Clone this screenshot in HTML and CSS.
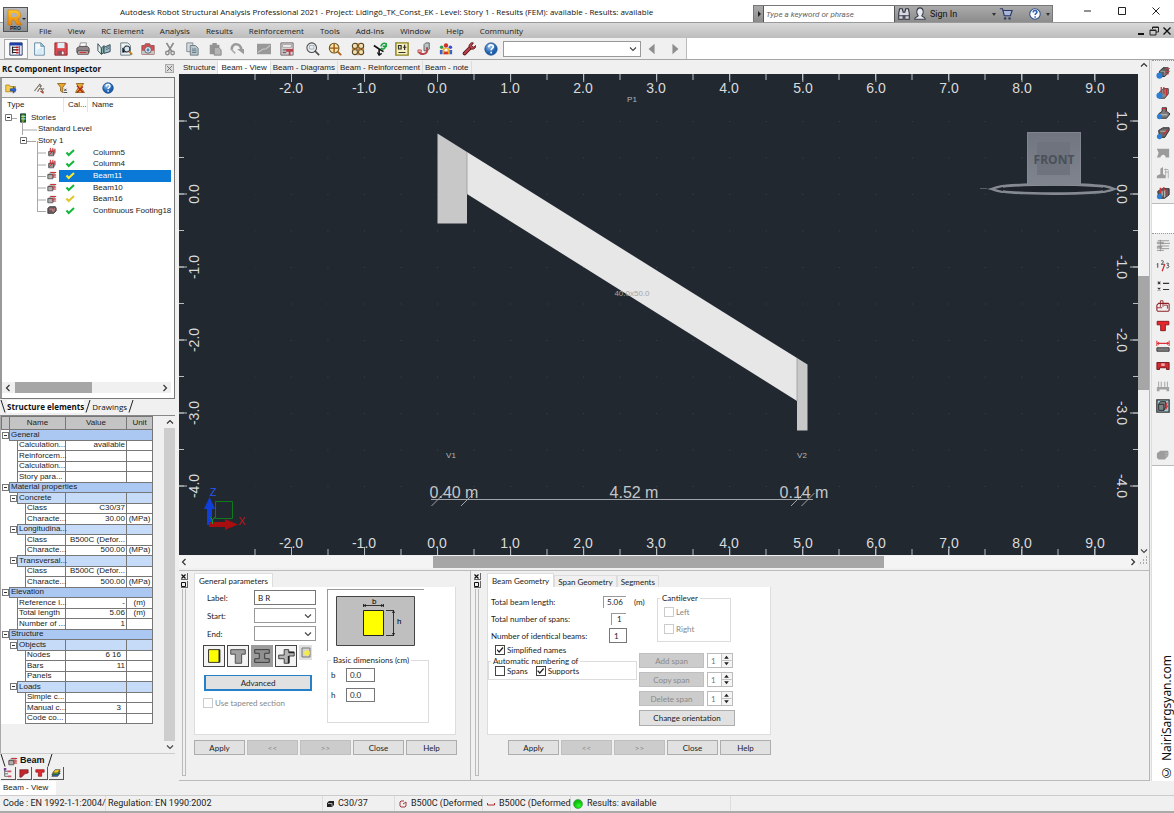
FILE: index.html
```html
<!DOCTYPE html>
<html lang="en">
<head>
<meta charset="utf-8">
<title>Autodesk Robot Structural Analysis Professional 2021</title>
<link rel="stylesheet" href="styles.css">
</head>
<body>
<svg class="defs" aria-hidden="true">
  <defs>
    <linearGradient id="gold" x1="0" y1="0" x2="0" y2="1"><stop offset="0" stop-color="#ffc62e"/><stop offset="1" stop-color="#e8820c"/></linearGradient>
    <linearGradient id="cube" x1="0" y1="0" x2="0" y2="1"><stop offset="0" stop-color="#70757f"/><stop offset="1" stop-color="#7f848e"/></linearGradient>
    <radialGradient id="ball" cx=".4" cy=".3"><stop offset="0" stop-color="#9cc8f5"/><stop offset="1" stop-color="#1c5fae"/></radialGradient>
    <radialGradient id="lamp" cx=".6" cy=".7"><stop offset="0" stop-color="#2cff2c"/><stop offset="1" stop-color="#0bbf0b"/></radialGradient>
    <pattern id="grid" x="437" y="121" width="36.525" height="36.5" patternUnits="userSpaceOnUse"><path d="M0 0h1v1h-1z" fill="#39414a"/></pattern>

    <symbol id="i-inspector" viewBox="0 0 16 16"><path d="M1 1h14v14H1z" fill="#fff" stroke="#16264f"/><path d="M1 1h14v3H1z" fill="#1d3fae"/><path d="M4 5v8M4 6h4M4 9h4M4 12h4" stroke="#222" stroke-width="1.4"/><path d="M8 5h3v2H8zM8 8h3v2H8zM8 11h3v2H8z" fill="#c01818"/><path d="M12 4v11" stroke="#5070c8" stroke-width="1.6"/></symbol>
    <symbol id="i-new" viewBox="0 0 16 16"><path d="M3 1h7l4 4v10H3z" fill="#f3f9fd" stroke="#56809a"/><path d="M10 1v4h4z" fill="#9cc6dc" stroke="#56809a" stroke-width=".7"/><path d="M5 9l7-3v8H5z" fill="#d6ebf6"/></symbol>
    <symbol id="i-save" viewBox="0 0 16 16"><path d="M1 1h13l1 1v13H1z" fill="#e0484e" stroke="#8d2228"/><path d="M4 1h8v6H4z" fill="#dff0f8"/><path d="M4 10h8v5H4z" fill="#8d5058"/><path d="M9 11h2v3H9z" fill="#fff"/></symbol>
    <symbol id="i-print" viewBox="0 0 16 16"><path d="M5 1h7l-1 5H4z" fill="#fff" stroke="#888"/><path d="M1 7l3-2h9l2 2v5H1z" fill="#8f8689" stroke="#4b4648"/><path d="M2 10h12v4H2z" fill="#c9bfc2" stroke="#4b4648"/><path d="M4 12h8" stroke="#c33" stroke-width="1.4"/></symbol>
    <symbol id="i-book" viewBox="0 0 16 16"><path d="M1 2l4 5v7l-4-4z" fill="#e9f1f4" stroke="#26414f"/><path d="M5 7l3-3v8l-3 2z" fill="#7fb59a" stroke="#26414f"/><path d="M8 6l7-3v8l-7 2z" fill="#a5bccb" stroke="#26414f"/><path d="M10 7l4-2M10 9l4-2" stroke="#4d6a7c"/></symbol>
    <symbol id="i-preview" viewBox="0 0 16 16"><path d="M2 1h8l3 3v11H2z" fill="#eef3f5" stroke="#5d7078"/><path d="M4 12V7h2v5M8 12V4" stroke="#456" /><circle cx="9" cy="8" r="3.4" fill="#cfe7f2" stroke="#333" stroke-width="1.2"/><path d="M11.500 10.500l3.500 4" stroke="#c07a1c" stroke-width="2"/></symbol>
    <symbol id="i-camera" viewBox="0 0 16 16"><path d="M1 4h3l1-2h5l1 2h4v10H1z" fill="#dc4a50" stroke="#8b5054"/><path d="M1 10h14v4H1z" fill="#c9c5c7"/><circle cx="8" cy="9" r="3.800" fill="#e8eef2" stroke="#555"/><circle cx="8" cy="9" r="1.800" fill="#4f88b8"/></symbol>
    <symbol id="i-cut" viewBox="0 0 16 16"><path d="M4 1l6 10M12 1L6 11" stroke="#8b8b8b" stroke-width="2"/><circle cx="5" cy="12.500" r="2" fill="none" stroke="#8b8b8b" stroke-width="1.600"/><circle cx="11" cy="12.500" r="2" fill="none" stroke="#8b8b8b" stroke-width="1.600"/></symbol>
    <symbol id="i-copy" viewBox="0 0 16 16"><path d="M2 1h7v10H2z" fill="#d5dadd" stroke="#7b868c"/><path d="M6 4h6l3 3v8H6z" fill="#b8c7ce" stroke="#69767c"/><path d="M8 8h5M8 10h5M8 12h5" stroke="#5e7580"/></symbol>
    <symbol id="i-paste" viewBox="0 0 16 16"><path d="M2 3h3V1h5v2h3v11H2z" fill="#949494"/><path d="M7 6h5l3 3v6H7z" fill="#b5b5b5" stroke="#858585"/></symbol>
    <symbol id="i-redo" viewBox="0 0 16 16"><path d="M2 9C1 1 12 0 13 9" fill="none" stroke="#9a9a9a" stroke-width="3"/><path d="M8 8h8v6z" fill="#9a9a9a"/><path d="M2 9l4 4" stroke="#b0b0b0" stroke-width="2"/></symbol>
    <symbol id="i-chart" viewBox="0 0 16 16"><path d="M0 2h16v12H0z" fill="#989898"/><path d="M1 12l6-4h3l5-4" fill="none" stroke="#c6c6c6" stroke-width="1.200"/></symbol>
    <symbol id="i-calc" viewBox="0 0 16 16"><path d="M1 1h14v14H1z" fill="#d7cfd1" stroke="#6b5f62"/><path d="M3 3h10v3H3z" fill="#f6f6f6" stroke="#777" stroke-width=".6"/><path d="M3 9h6M3 12h4" stroke="#666" stroke-width="1.500"/><path d="M7 8h8v3h-3v4h-2v-4H7z" fill="#b8444a"/></symbol>
    <symbol id="i-zoomwin" viewBox="0 0 16 16"><circle cx="6.500" cy="6.500" r="5.500" fill="#e6edf0" stroke="#4b4b4b" stroke-width="1.200"/><path d="M4 4h5v4H4z" fill="none" stroke="#aaa"/><path d="M10 10l5 5" stroke="#4b4b4b" stroke-width="2"/></symbol>
    <symbol id="i-zoomall" viewBox="0 0 16 16"><circle cx="7" cy="7" r="5.500" fill="#fbe3a4" stroke="#6b5420" stroke-width="1.200"/><path d="M7 2v10M2 7h10" stroke="#9a5b18" stroke-width="1.600"/><path d="M11 11l4 4" stroke="#b5641c" stroke-width="2.200"/></symbol>
    <symbol id="i-views" viewBox="0 0 16 16"><g fill="#f3dfae" stroke="#4f4022" stroke-width="1.200"><circle cx="4.500" cy="4.500" r="3"/><circle cx="11.500" cy="4.500" r="3"/><circle cx="4.500" cy="11.500" r="3"/><circle cx="11.500" cy="11.500" r="3"/></g><path d="M8 1v14M1 8h14" stroke="#b7711c" stroke-width="1.500" stroke-dasharray="2 1"/></symbol>
    <symbol id="i-axes" viewBox="0 0 16 16"><path d="M7 8V15M7 8L1 4M7 8l5 3" stroke="#111" stroke-width="1.800"/><path d="M5 12l2 3 3-2" fill="none" stroke="#111" stroke-width="1.400"/><path d="M9 5c1-4 4-4 6-3M15 1v4h-4M14 6c-1 2-3 3-5 1" fill="none" stroke="#19a33b" stroke-width="1.800"/></symbol>
    <symbol id="i-snap" viewBox="0 0 16 16"><path d="M1 1h14v14H1z" fill="#f5f0bd" stroke="#8a8120" stroke-width="1.600"/><path d="M4 4h3v4H4zM4 12h8M11 3v6M9 6h4" fill="none" stroke="#333" stroke-width="1.400"/></symbol>
    <symbol id="i-hook" viewBox="0 0 16 16"><path d="M8 3l2-2h4v7l-2 2H8z" fill="#b9c6c8" stroke="#555"/><path d="M11 6c4 9-9 10-9 4" fill="none" stroke="#b8444a" stroke-width="2.200"/><path d="M1 9h4v3H1z" fill="#e9a7a0" stroke="#a11c22" stroke-width=".6"/></symbol>
    <symbol id="i-people" viewBox="0 0 16 16"><circle cx="8" cy="4" r="2.500" fill="#d03028"/><circle cx="3" cy="6" r="2" fill="#28a048"/><circle cx="13" cy="6" r="2" fill="#3050d0"/><path d="M4 7h8v7H4z" fill="#f0b028"/><path d="M1 9h3v5H1zM12 9h3v5h-3z" fill="#3c62c8"/><path d="M5 14l3-6 3 6z" fill="#d03028"/><circle cx="8" cy="9.500" r="1.700" fill="#fff"/></symbol>
    <symbol id="i-wrench" viewBox="0 0 16 16"><path d="M3 13l7-7" stroke="#5c1418" stroke-width="4.400" stroke-linecap="round"/><path d="M3 13l7-7" stroke="#b8454b" stroke-width="2.400" stroke-linecap="round"/><path d="M8 5c0-3 3-5 5-4l-2 3 2 2 3-2c0 3-3 5-6 4z" fill="#b8454b" stroke="#5c1418"/></symbol>
    <symbol id="i-help" viewBox="0 0 16 16"><circle cx="8" cy="8" r="7" fill="url(#ball)" stroke="#1a4a86"/><path d="M5.500 6c0-4 6-3 5 0-.5 1.400-2.300 1.400-2.300 3.400M8.200 11v2" fill="none" stroke="#fff" stroke-width="1.900"/></symbol>
    <symbol id="i-helpw" viewBox="0 0 16 16"><circle cx="8" cy="8" r="7" fill="#fff" stroke="#2e4f86" stroke-width="1.400"/><path d="M5.500 6c0-4 6-3 5 0-.5 1.400-2.300 1.400-2.300 3.400M8.200 11v2" fill="none" stroke="#2a62b8" stroke-width="2"/></symbol>
    <symbol id="i-folder" viewBox="0 0 16 16"><path d="M1 4h5l1 2h7v7H1z" fill="#f4cf4e" stroke="#a87c14"/><path d="M7 9h4V6l4 4.500-4 4.500v-3H7z" fill="#2c63d6" stroke="#173b8f" stroke-width=".7"/></symbol>
    <symbol id="i-pointer" viewBox="0 0 16 16"><path d="M2 12l7-9 2 2-5 8M9 5l5 9M10 10l5-1" fill="none" stroke="#6f6a58" stroke-width="1.400"/><path d="M10 12l4 3" stroke="#b03020" stroke-width="1.600"/></symbol>
    <symbol id="i-filter" viewBox="0 0 16 16"><path d="M2 2h11l-4 5v7l-3-2V7z" fill="#eda72d" stroke="#7d5612"/><path d="M11 9l3 3M14 9l-3 3M10 14h5" stroke="#222"/></symbol>
    <symbol id="i-filteroff" viewBox="0 0 16 16"><path d="M3 2h10l-4 5 5 7H2l4-7z" fill="#eda72d" stroke="#7d5612"/><path d="M4 5l8 9M12 6l-8 8" stroke="#b3201c" stroke-width="1.600"/></symbol>
    <symbol id="i-back" viewBox="0 0 10 14"><path d="M8 1v12L1 7z" fill="#8e8e8e"/></symbol>
    <symbol id="i-fwd" viewBox="0 0 10 14"><path d="M2 1v12l7-6z" fill="#8e8e8e"/></symbol>
    <symbol id="i-left" viewBox="0 0 8 8"><path d="M5.500 1L2.500 4l3 3" fill="none" stroke="#333" stroke-width="1.200"/></symbol>
    <symbol id="i-right" viewBox="0 0 8 8"><path d="M2.500 1l3 3-3 3" fill="none" stroke="#333" stroke-width="1.200"/></symbol>
    <symbol id="i-up" viewBox="0 0 8 8"><path d="M1 5.500l3-3 3 3" fill="none" stroke="#333" stroke-width="1.200"/></symbol>
    <symbol id="i-down" viewBox="0 0 8 8"><path d="M1 2.500l3 3 3-3" fill="none" stroke="#444" stroke-width="1.100"/></symbol>
    <symbol id="i-caret" viewBox="0 0 6 6"><path d="M1 2h4L3 5z" fill="#333"/></symbol>

    <symbol id="i-column" viewBox="0 0 12 12"><path d="M2 5l3-2h5v5l-2 2H2z" fill="#9a9392"/><path d="M2 5.500h6v5M2 5.500v5h6" fill="none" stroke="#444"/><path d="M4 1v5M7 1v5M9.500 2v5M3 9l3-3" stroke="#d03038" stroke-width="1.200"/></symbol>
    <symbol id="i-beam" viewBox="0 0 12 12"><path d="M1 5l3-3h6v5l-3 3H1z" fill="#b4aeae"/><path d="M1 5.500h6v5M1 5.500v5h6" fill="none" stroke="#444"/><path d="M4 3h7M6 6h5M7 8.500h4" stroke="#d03038" stroke-width="1.200"/></symbol>
    <symbol id="i-footing" viewBox="0 0 12 12"><path d="M1 4l2-2h7l1 2v3l-3 3H1z" fill="#6b5c5e" stroke="#333"/><path d="M3 5h4v3M9 4l-1 4" fill="none" stroke="#d8848a" stroke-width="1.200"/></symbol>
    <symbol id="i-check" viewBox="0 0 10 10"><path d="M1.500 4.500l2.200 2.500L9 2" fill="none" stroke="currentColor" stroke-width="2"/></symbol>
    <symbol id="i-stories" viewBox="0 0 10 12"><path d="M2 1h6v10H2z" fill="#21772b" stroke="#133"/><path d="M3 4h5M3 7h5" stroke="#9fe0f0" stroke-width="1.400"/><path d="M5 2v9" stroke="#e8d030"/></symbol>
    <symbol id="i-treeview" viewBox="0 0 12 12"><path d="M2 1v9h4M2 4h3M2 7h4" fill="none" stroke="#555"/><path d="M1 0h3v3H1z" fill="#7a3a9a"/><path d="M5 3h5v2H5zM6 9h4v2H6z" fill="#c4566a"/></symbol>
    <symbol id="i-flag" viewBox="0 0 12 12"><path d="M1 2h10v4l-4 1-4 4H1z" fill="#c3262a" stroke="#5d1114" stroke-width=".7"/></symbol>
    <symbol id="i-tred" viewBox="0 0 12 12"><path d="M1 2h10v3H8v5H4V5H1z" fill="#e5262c" stroke="#861418" stroke-width=".8"/></symbol>
    <symbol id="i-layers" viewBox="0 0 12 12"><path d="M1 10l3-4h7l-3 4z" fill="#2f6fc4" stroke="#222" stroke-width=".7"/><path d="M1 8l3-4h7L8 8z" fill="#56b040" stroke="#222" stroke-width=".7"/><path d="M2 6l3-4h6L8 6z" fill="#f0c828" stroke="#222" stroke-width=".7"/></symbol>

    <symbol id="r-beam" viewBox="0 0 16 16"><path d="M4 6l4-4h6v6l-4 4H4z" fill="#5e5e60" stroke="#222"/><path d="M5 6h5v5" fill="none" stroke="#aaa"/><path d="M11 3h5M11 6h5M10 9h5" stroke="#d8464c"/><circle cx="4" cy="11" r="3.500" fill="#2c7fd6"/></symbol>
    <symbol id="r-column" viewBox="0 0 16 16"><path d="M4 7l4-4h6v6l-4 5H4z" fill="#8b8482" stroke="#333"/><path d="M6 1v8M9 1v8M12 3v8" stroke="#c83038" stroke-width="1.400"/><circle cx="4" cy="11" r="3.500" fill="#2c7fd6"/></symbol>
    <symbol id="r-foot" viewBox="0 0 16 16"><path d="M3 9l4-3V2h5v4l4 3-4 5H3z" fill="#7b7b7b" stroke="#222"/><path d="M7 3h4v4" fill="none" stroke="#c83038" stroke-width="1.300"/><path d="M5 10h8" stroke="#ccc"/><circle cx="4" cy="12" r="3" fill="#2c7fd6"/></symbol>
    <symbol id="r-slab" viewBox="0 0 16 16"><path d="M3 5l5-3h7v3l-5 8H4z" fill="#6a6a6c" stroke="#222"/><path d="M8 10l6-6" stroke="#c83038" stroke-width="1.600"/><path d="M5 6h6" stroke="#bbb"/><circle cx="4" cy="12" r="3" fill="#2c7fd6"/></symbol>
    <symbol id="r-deep" viewBox="0 0 16 16"><path d="M1 3h14v10h-4c0-4-5-4-6 0H1l2-5z" fill="#9b9b9b"/></symbol>
    <symbol id="r-wall" viewBox="0 0 16 16"><path d="M5 3l3-2v8l3 2v3H1v-3l4-2z" fill="#9b9b9b"/><path d="M11 3v10M14 5v9M9 4h5M10 7h4" stroke="#aaa"/></symbol>
    <symbol id="r-group" viewBox="0 0 16 16"><path d="M2 6l5-3h8v7l-5 4H3z" fill="#5f5f5f" stroke="#222"/><path d="M5 2v6M9 1v6M13 4v7" stroke="#d83038" stroke-width="1.600"/><path d="M10 5v8M7 6v5" stroke="#ddd"/><circle cx="4" cy="12" r="3" fill="#2c7fd6"/></symbol>
    <symbol id="r-list" viewBox="0 0 16 16"><path d="M1 3h8v3H1zM1 8h6v3H1z" fill="#aaa"/><path d="M2 2h13M5 5h11M2 8h13M6 11h9M1 13h8M5 1v13" stroke="#8f8f8f"/></symbol>
    <symbol id="r-levels" viewBox="0 0 16 16"><path d="M2 5v5M1 6l1-1M6 2c4-1 2 3 0 4h4M12 5c4-1 2 2 1 2 3 0 2 4-1 3" fill="none" stroke="#444" stroke-width="1.100"/><path d="M10 6l-3 8" stroke="#d22630" stroke-width="1.400"/></symbol>
    <symbol id="r-opts" viewBox="0 0 16 16"><path d="M2 3l3 3M5 3L2 6M2 10l3 3M5 10l-3 3M8 5h7M8 12h7" stroke="#333" stroke-width="1.200"/></symbol>
    <symbol id="r-rect" viewBox="0 0 16 16"><path d="M3 5h11l1 1v7l-1 1H2l-1-1V7z" fill="none" stroke="#8c2026" stroke-width="1.200"/><path d="M5 9V2h3v7M9 7h4v4M1 10h6" fill="none" stroke="#8c2026"/></symbol>
    <symbol id="r-dim" viewBox="0 0 16 16"><path d="M1 2v6M15 2v6M1 5h14M3 3.500v3M13 3.500v3" stroke="#e03038" stroke-width="1.200"/><path d="M1 10h14v4H1z" fill="#7d7d7d" stroke="#333"/></symbol>
    <symbol id="r-support" viewBox="0 0 16 16"><path d="M1 4h14v8h-3v-2H4v2H1z" fill="#cf2a30" stroke="#6d1114"/><path d="M6 5h4v3H6z" fill="#f0a8a8"/></symbol>
    <symbol id="r-load" viewBox="0 0 16 16"><path d="M1 9h14v5h-3v-2H4v2H1z" fill="#a2a2a2"/><path d="M3 3v6M6 3v6M10 3v6M13 3v6" stroke="#999"/></symbol>
    <symbol id="r-section" viewBox="0 0 16 16"><path d="M1 1h14v14H1z" fill="#a6c8d2" stroke="#333" stroke-width="1.500"/><path d="M3 6h6v7H3zM3 6l2-3h6v6l-2 4" fill="#7e8386" stroke="#222"/><path d="M13 4l-2 4h2l-2 4" fill="none" stroke="#d02a30" stroke-width="1.300"/></symbol>
    <symbol id="r-solid" viewBox="0 0 16 16"><path d="M1 6l4-3h9v6l-4 4H3l-2-2z" fill="#9d9d9d"/><path d="M10 6h5M10 9h4" stroke="#bbb"/></symbol>
  </defs>
</svg>

<header class="titlebar">
  <h1>Autodesk Robot Structural Analysis Professional 2021 - Project: Lidingö_TK_Const_EK - Level: Story 1 - Results (FEM): available - Results: available</h1>
  <form class="infocenter">
    <button type="button" class="infoarrow" aria-label="Collapse search"><svg viewBox="0 0 6 8"><path d="M2 1l3 3-3 3z" fill="#222"/></svg></button>
    <input type="text" placeholder="Type a keyword or phrase" aria-label="Search">
    <button type="button" aria-label="Find"><svg class="ic14" viewBox="0 0 16 16"><path d="M2 7l1-5h3l1 4h2l1-4h3l1 5v7H9v-4H7v4H2z" fill="#d7d9e2" stroke="#2f3340" stroke-width="1.200"/><path d="M2 10h5M9 10h5" stroke="#2f3340"/></svg></button>
    <button type="button" class="signin"><svg class="ic14" viewBox="0 0 16 16"><path d="M2 14c0-3 3-2 4-4-3-3-2-9 2-9s5 6 2 9c1 2 4 1 4 4z" fill="#e8eaf0" stroke="#3b404e" stroke-width="1.200"/></svg>Sign In<svg class="ic6"><use href="#i-caret"/></svg></button>
    <button type="button" aria-label="App store"><svg class="ic14" viewBox="0 0 16 16"><path d="M1 2h3l2 8h7l2-6H5" fill="#aab6d8" stroke="#2c3864" stroke-width="1.300"/><circle cx="7" cy="13" r="1.400" fill="#2c3864"/><circle cx="12" cy="13" r="1.400" fill="#2c3864"/></svg></button>
    <button type="button" class="infohelp" aria-label="Help"><svg class="ic12"><use href="#i-helpw"/></svg><svg class="ic6"><use href="#i-caret"/></svg></button>
  </form>
  <div class="winctl">
    <button aria-label="Minimize"><svg class="ic8" viewBox="0 0 8 8"><path d="M1 4h7" stroke="#222"/></svg></button>
    <button aria-label="Maximize"><svg class="ic8" viewBox="0 0 8 8"><path d="M.5.500h7v7h-7z" fill="none" stroke="#222"/></svg></button>
    <button aria-label="Close"><svg class="ic8" viewBox="0 0 8 8"><path d="M.5.500l7 7M7.500.500l-7 7" stroke="#222"/></svg></button>
  </div>
  <button class="logo" aria-label="Application menu">
    <svg viewBox="0 0 23 23"><path d="M4 2h7c7 0 7 8 3 9l4 6h-5l-3-5H8v5H4z" fill="url(#gold)" stroke="#b8720c" stroke-width=".5"/><path d="M8 5h3c3 0 3 4 0 4H8z" fill="#b0b2b4"/><path d="M18 10h4l-2 2z" fill="#222"/></svg>
    <span>PRO</span>
  </button>
</header>

<nav class="menubar">
  <a href="#">File</a><a href="#">View</a><a href="#">RC Element</a><a href="#">Analysis</a><a href="#">Results</a><a href="#">Reinforcement</a><a href="#">Tools</a><a href="#">Add-Ins</a><a href="#">Window</a><a href="#">Help</a><a href="#">Community</a>
  <div class="mdi">
    <button aria-label="Minimize document"><svg class="ic10" viewBox="0 0 10 10"><path d="M2 8h6" stroke="#111" stroke-width="2"/></svg></button>
    <button aria-label="Restore document"><svg class="ic10" viewBox="0 0 10 10"><path d="M3.500 3V1h6v5H7M1 4h6v5H1zM1 4.500h6M3.500 1.500h6" fill="none" stroke="#222"/></svg></button>
    <button aria-label="Close document"><svg class="ic10" viewBox="0 0 10 10"><path d="M1.500 1.500l7 7M8.500 1.500l-7 7" stroke="#111" stroke-width="1.400"/></svg></button>
  </div>
</nav>

<div class="toolbar">
  <div class="tools">
    <div class="tg g7">
      <button class="on" aria-label="Inspector"><svg class="ic14"><use href="#i-inspector"/></svg></button>
      <button aria-label="New"><svg class="ic14"><use href="#i-new"/></svg></button>
      <button aria-label="Save"><svg class="ic14"><use href="#i-save"/></svg></button>
      <button aria-label="Print"><svg class="ic14"><use href="#i-print"/></svg></button>
      <button aria-label="Printout composition"><svg class="ic14"><use href="#i-book"/></svg></button>
      <button aria-label="Print preview"><svg class="ic14"><use href="#i-preview"/></svg></button>
      <button aria-label="Screen capture"><svg class="ic14"><use href="#i-camera"/></svg></button>
    </div>
    <div class="tg g4">
      <button aria-label="Cut"><svg class="ic14"><use href="#i-cut"/></svg></button>
      <button aria-label="Copy"><svg class="ic14"><use href="#i-copy"/></svg></button>
      <button aria-label="Paste"><svg class="ic14"><use href="#i-paste"/></svg></button>
      <button aria-label="Redo"><svg class="ic14"><use href="#i-redo"/></svg></button>
    </div>
    <div class="tg g2">
      <button aria-label="Diagrams"><svg class="ic14"><use href="#i-chart"/></svg></button>
      <button aria-label="Calculations"><svg class="ic14"><use href="#i-calc"/></svg></button>
    </div>
    <div class="tg g9">
      <button aria-label="Zoom window"><svg class="ic14"><use href="#i-zoomwin"/></svg></button>
      <button aria-label="Zoom all"><svg class="ic14"><use href="#i-zoomall"/></svg></button>
      <button aria-label="Views"><svg class="ic14"><use href="#i-views"/></svg></button>
      <button aria-label="Rotate axes"><svg class="ic14"><use href="#i-axes"/></svg></button>
      <button aria-label="Snap settings"><svg class="ic14"><use href="#i-snap"/></svg></button>
      <button aria-label="Reinforcement"><svg class="ic14"><use href="#i-hook"/></svg></button>
      <button aria-label="Display"><svg class="ic14"><use href="#i-people"/></svg></button>
      <button aria-label="Preferences"><svg class="ic14"><use href="#i-wrench"/></svg></button>
      <button aria-label="Help topics"><svg class="ic14"><use href="#i-help"/></svg></button>
    </div>
    <span class="select layout"><select aria-label="Layout"><option></option></select><svg class="ic8"><use href="#i-down"/></svg></span>
    <div class="tg g2 nav">
      <button aria-label="Previous"><svg class="ic12"><use href="#i-back"/></svg></button>
      <button aria-label="Next"><svg class="ic12"><use href="#i-fwd"/></svg></button>
    </div>
  </div>
</div>

<main class="work">
  <aside class="side">
    <h2 class="sidehead">RC Component Inspector<button aria-label="Close inspector"><svg viewBox="0 0 8 8"><path d="M1 1l6 6M7 1L1 7" stroke="#666"/></svg></button></h2>
    <section class="inspector">
      <div class="insptools">
        <button aria-label="Open"><svg class="ic12"><use href="#i-folder"/></svg></button>
        <button class="far" aria-label="Select"><svg class="ic12"><use href="#i-pointer"/></svg></button>
        <button class="near" aria-label="Filter"><svg class="ic12"><use href="#i-filter"/></svg></button>
        <button aria-label="Clear filter"><svg class="ic12"><use href="#i-filteroff"/></svg></button>
        <button class="far" aria-label="Help"><svg class="ic12"><use href="#i-help"/></svg></button>
      </div>
      <div class="treehead"><span>Type</span><span>Cal...</span><span>Name</span></div>
      <div class="tree">
        <svg class="treelines" viewBox="0 0 60 105"><path d="M9 6.500h5M19.500 10v13M20 18h14M23 29.500h10M34.500 29v71M35 41h8M35 53h8M35 64.500h8M35 76h8M35 88h8M35 99.500h8" fill="none" stroke="#a8a8a8"/><path d="M2.500 2.500h6v6h-6zM17.500 25.500h6v6h-6z" fill="#fff" stroke="#777"/><path d="M4 5.500h3M19 28.500h3" stroke="#222"/></svg>
        <div class="trow"><span class="t1"><svg class="ic10"><use href="#i-stories"/></svg>Stories</span></div>
        <div class="trow"><span class="t2">Standard Level</span></div>
        <div class="trow"><span class="t2">Story 1</span></div>
        <div class="trow"><svg class="ic10 kind"><use href="#i-column"/></svg><span class="cell"><svg class="ic10 ok"><use href="#i-check"/></svg>Column5</span></div>
        <div class="trow"><svg class="ic10 kind"><use href="#i-column"/></svg><span class="cell"><svg class="ic10 ok"><use href="#i-check"/></svg>Column4</span></div>
        <div class="trow"><svg class="ic10 kind"><use href="#i-beam"/></svg><span class="cell sel"><svg class="ic10 warn"><use href="#i-check"/></svg>Beam11</span></div>
        <div class="trow"><svg class="ic10 kind"><use href="#i-beam"/></svg><span class="cell"><svg class="ic10 ok"><use href="#i-check"/></svg>Beam10</span></div>
        <div class="trow"><svg class="ic10 kind"><use href="#i-beam"/></svg><span class="cell"><svg class="ic10 warn"><use href="#i-check"/></svg>Beam16</span></div>
        <div class="trow"><svg class="ic10 kind"><use href="#i-footing"/></svg><span class="cell"><svg class="ic10 ok"><use href="#i-check"/></svg>Continuous Footing18</span></div>
      </div>
      <div class="hscroll treescroll"><svg class="ic8"><use href="#i-left"/></svg><i class="track"><i class="thumb"></i></i><svg class="ic8"><use href="#i-right"/></svg></div>
    </section>
    <div class="slanttabs"><svg class="slant" viewBox="0 0 6 13"><path d="M1 0l4 12.500" stroke="#222" fill="none"/></svg><b>Structure elements</b><svg class="slant" viewBox="0 0 6 13"><path d="M5 0L1 12.500" stroke="#222" fill="none"/></svg><span>Drawings</span><svg class="slant" viewBox="0 0 6 13"><path d="M5 0L1 12.500" stroke="#222" fill="none"/></svg></div>

    <section class="props">
      <table>
        <colgroup><col class="c8"><col class="c8"><col class="c8"><col class="c40"><col class="c61"><col class="c26"></colgroup>
        <thead><tr><th></th><th colspan="3">Name</th><th>Value</th><th>Unit</th></tr></thead>
        <tbody>
          <tr class="g"><td class="x"><i></i></td><td colspan="5">General</td></tr>
          <tr><td class="n" colspan="2"></td><td colspan="2">Calculation...</td><td class="v">available</td><td></td></tr>
          <tr><td class="n" colspan="2"></td><td colspan="2">Reinforcem...</td><td></td><td></td></tr>
          <tr><td class="n" colspan="2"></td><td colspan="2">Calculation...</td><td></td><td></td></tr>
          <tr><td class="n" colspan="2"></td><td colspan="2">Story para...</td><td></td><td></td></tr>
          <tr class="g"><td class="x"><i></i></td><td colspan="5">Material properties</td></tr>
          <tr class="s"><td class="n"></td><td class="x"><i></i></td><td colspan="2">Concrete</td><td></td><td></td></tr>
          <tr><td class="n" colspan="3"></td><td>Class</td><td class="v">C30/37</td><td></td></tr>
          <tr><td class="n" colspan="3"></td><td>Characte...</td><td class="v">30.00</td><td class="u">(MPa)</td></tr>
          <tr class="s"><td class="n"></td><td class="x"><i></i></td><td colspan="2">Longitudina...</td><td></td><td></td></tr>
          <tr><td class="n" colspan="3"></td><td>Class</td><td class="v">B500C (Defor...</td><td></td></tr>
          <tr><td class="n" colspan="3"></td><td>Characte...</td><td class="v">500.00</td><td class="u">(MPa)</td></tr>
          <tr class="s"><td class="n"></td><td class="x"><i></i></td><td colspan="2">Transversal...</td><td></td><td></td></tr>
          <tr><td class="n" colspan="3"></td><td>Class</td><td class="v">B500C (Defor...</td><td></td></tr>
          <tr><td class="n" colspan="3"></td><td>Characte...</td><td class="v">500.00</td><td class="u">(MPa)</td></tr>
          <tr class="g"><td class="x"><i></i></td><td colspan="5">Elevation</td></tr>
          <tr><td class="n" colspan="2"></td><td colspan="2">Reference l...</td><td class="v">-</td><td class="u">(m)</td></tr>
          <tr><td class="n" colspan="2"></td><td colspan="2">Total length</td><td class="v">5.06</td><td class="u">(m)</td></tr>
          <tr><td class="n" colspan="2"></td><td colspan="2">Number of ...</td><td class="v">1</td><td></td></tr>
          <tr class="g"><td class="x"><i></i></td><td colspan="5">Structure</td></tr>
          <tr class="s"><td class="n"></td><td class="x"><i></i></td><td colspan="2">Objects</td><td></td><td></td></tr>
          <tr><td class="n" colspan="3"></td><td>Nodes</td><td class="v list">6 16</td><td></td></tr>
          <tr><td class="n" colspan="3"></td><td>Bars</td><td class="v">11</td><td></td></tr>
          <tr><td class="n" colspan="3"></td><td>Panels</td><td></td><td></td></tr>
          <tr class="s"><td class="n"></td><td class="x"><i></i></td><td colspan="2">Loads</td><td></td><td></td></tr>
          <tr><td class="n" colspan="3"></td><td>Simple c...</td><td></td><td></td></tr>
          <tr><td class="n" colspan="3"></td><td>Manual c...</td><td class="v list">3</td><td></td></tr>
          <tr><td class="n" colspan="3"></td><td>Code co...</td><td></td><td></td></tr>
        </tbody>
      </table>
      <div class="vscroll"><svg class="ic8"><use href="#i-up"/></svg><i class="thumb"></i><svg class="ic8"><use href="#i-down"/></svg></div>
    </section>
    <div class="beamtab"><svg class="slant" viewBox="0 0 6 13"><path d="M1 0l4 12.500" stroke="#222" fill="none"/></svg><svg class="ic10"><use href="#i-beam"/></svg><b>Beam</b><svg class="slant" viewBox="0 0 6 13"><path d="M5 0L1 12.500" stroke="#222" fill="none"/></svg></div>
    <div class="viewbtns">
      <button aria-label="Tree"><svg class="ic10"><use href="#i-treeview"/></svg></button>
      <button aria-label="Calculation"><svg class="ic10"><use href="#i-flag"/></svg></button>
      <button aria-label="Section"><svg class="ic10"><use href="#i-tred"/></svg></button>
      <button aria-label="Layers"><svg class="ic10"><use href="#i-layers"/></svg></button>
    </div>
  </aside>

  <div class="center">
    <section class="viewer">
      <div class="viewmain">
        <nav class="viewtabs"><a href="#">Structure</a><a href="#" class="cur">Beam - View</a><a href="#">Beam - Diagrams</a><a href="#">Beam - Reinforcement</a><a href="#">Beam - note</a></nav>
        <svg class="canvas" viewBox="179 74 959 481" role="img" aria-label="Beam elevation">
          <path d="M179 74h959v481H179z" fill="#212830"/>
          <path d="M255 121h860v400H255z" fill="url(#grid)"/>
          <g stroke="#b9bdc2" fill="none">
            <path d="M254.500 77H1096M254.500 552H1096" stroke-width="6" stroke-dasharray="1 35.500"/>
            <path d="M291 78H1096M291 551H1096" stroke-width="8" stroke-dasharray="1 72.050"/>
            <path d="M181.500 120.500V488M1135.500 120.500V488" stroke-width="5" stroke-dasharray="1 35.500"/>
            <path d="M183 120.500V488M1134 120.500V488" stroke-width="8" stroke-dasharray="1 72"/>
          </g>
          <g class="scale">
            <text x="291" y="93">-2.0</text><text x="364" y="93">-1.0</text><text x="437" y="93">0.0</text><text x="510" y="93">1.0</text><text x="583" y="93">2.0</text><text x="656" y="93">3.0</text><text x="729" y="93">4.0</text><text x="803" y="93">5.0</text><text x="876" y="93">6.0</text><text x="949" y="93">7.0</text><text x="1022" y="93">8.0</text><text x="1095" y="93">9.0</text>
            <text x="291" y="548">-2.0</text><text x="364" y="548">-1.0</text><text x="437" y="548">0.0</text><text x="510" y="548">1.0</text><text x="583" y="548">2.0</text><text x="656" y="548">3.0</text><text x="729" y="548">4.0</text><text x="803" y="548">5.0</text><text x="876" y="548">6.0</text><text x="949" y="548">7.0</text><text x="1022" y="548">8.0</text><text x="1095" y="548">9.0</text>
            <g transform="rotate(-90)"><text x="-121" y="199">1.0</text><text x="-194" y="199">0.0</text><text x="-267" y="199">-1.0</text><text x="-340" y="199">-2.0</text><text x="-413" y="199">-3.0</text><text x="-486" y="199">-4.0</text></g>
          </g>
          <g>
            <path d="M437.500 133.500L467 152v71.500h-29.500z" fill="#c8c8c8"/>
            <path d="M467 152l330 206v43L467 194z" fill="#e7e7e7"/>
            <path d="M797 358l10.500 6.500v66H797z" fill="#c8c8c8"/>
            <path d="M467 152v42M797 358v43" stroke="#999" stroke-width=".8"/>
          </g>
          <path d="M431 499.500h382M431.500 506l13-13M461 506l13-13M791 506l13-13M801.500 506l13-13" stroke="#a0a4a9" fill="none"/>
          <g class="dims"><text x="454" y="498">0.40 m</text><text x="634" y="498">4.52 m</text><text x="804" y="498">0.14 m</text></g>
          <g class="tags"><text x="632" y="102">P1</text><text x="451" y="458">V1</text><text x="802" y="458">V2</text><text x="632" y="296" fill="#a4a6a8">40.0x50.0</text></g>
          <ellipse cx="1053" cy="189" rx="60" ry="4.600" fill="#1d232b" stroke="#858a92" stroke-width="2.600"/>
          <path d="M987 189l16-4v8zM1119 189l-16-4v8z" fill="#858a92"/>
          <path d="M1003 187l-8 2 8 2zM1103 187l8 2-8 2z" fill="#1d232b"/>
          <path d="M980 188.500h7" stroke="#5a6068"/>
          <path d="M1027 132h54v53h-54z" fill="url(#cube)"/>
          <path d="M1037 142h33v33h-33z" fill="#6e737d"/>
          <path d="M1027.500 132.500h53v53h-53z" fill="none" stroke="#8a8f98" stroke-width=".6"/>
          <text class="face" x="1054" y="164">FRONT</text>
          <g class="scale" transform="rotate(90)"><text x="121" y="-1117">1.0</text><text x="194" y="-1117">0.0</text><text x="267" y="-1117">-1.0</text><text x="340" y="-1117">-2.0</text><text x="413" y="-1117">-3.0</text><text x="486" y="-1117">-4.0</text></g>
          <path d="M215.500 501.500h17v17h-17z" fill="none" stroke="#0f7a1c"/>
          <path d="M207 525v-16h-3l5.500-12 5.500 12h-3v16z" fill="#0f3fd8"/>
          <path d="M209 522h16v-3l13 5.500-13 5.500v-3h-16z" fill="#a80d10"/>
          <path d="M210 517l2.500 3 2.500-3M212.500 520v4" stroke="#19962a" fill="none"/>
          <g class="ucs"><text x="213" y="496" fill="#2a55f0">Z</text><text x="242" y="525" fill="#c01418">X</text></g>
        </svg>
      </div>
      <div class="vscroll viewv"><svg class="ic8"><use href="#i-up"/></svg><i class="gap"></i><i class="thumb"></i><i class="rest"></i><svg class="ic8"><use href="#i-down"/></svg></div>
      <div class="hscroll viewh"><svg class="ic8"><use href="#i-left"/></svg><i class="track"><i class="thumb"></i></i><svg class="ic8"><use href="#i-right"/></svg></div>
      <svg class="sizegrip" viewBox="0 0 11 11"><path d="M8 2h1M8 5h1M5 5h1M8 8h1M5 8h1M2 8h1" stroke="#aaa" stroke-width="2"/></svg>
    </section>

    <div class="dialogs">
      <section class="dialog d1">
        <div class="grip"><button aria-label="Close panel"><svg viewBox="0 0 7 7"><path d="M1.500 1.500l4 4M5.500 1.500l-4 4" stroke="#111" stroke-width="1.200"/></svg></button><button aria-label="Float panel"><svg viewBox="0 0 7 7"><path d="M1.500 1.500h4v4h-4z" fill="none" stroke="#111"/></svg></button><i></i></div>
        <div class="dbody">
          <div class="dtabs"><button class="cur">General parameters</button></div>
          <div class="page general">
            <div class="gleft">
              <div class="fields">
                <label for="f-label">Label:</label><input id="f-label" type="text" value="B R">
                <label for="f-start">Start:</label><span class="select"><select id="f-start"><option></option></select><svg class="ic8"><use href="#i-down"/></svg></span>
                <label for="f-end">End:</label><span class="select"><select id="f-end"><option></option></select><svg class="ic8"><use href="#i-down"/></svg></span>
              </div>
              <div class="shapes">
                <button aria-label="Rectangle"><svg viewBox="0 0 22 22"><path d="M5 4h12v14H5z" fill="#ff0" stroke="#222"/><path d="M17 4v14" stroke="#222" stroke-width="2"/></svg></button>
                <button aria-label="T section"><svg viewBox="0 0 22 22"><path d="M3 4h16v5h-4v10H8V9H3z" fill="#a0a0a0" stroke="#444"/></svg></button>
                <button class="dark" aria-label="I section"><svg viewBox="0 0 22 22"><path d="M3 4h16v4h-5v6h5v4H3v-4h5V8H3z" fill="#8f8f8f" stroke="#333"/></svg></button>
                <button aria-label="Other section"><svg viewBox="0 0 22 22"><path d="M9 4h5v3h6v4h-6v8H9v-5H3v-4h6z" fill="#b4b4b4" stroke="#333"/><path d="M14 7h6M14 19v-8" stroke="#222" stroke-width="2"/></svg></button>
                <button class="tiny" aria-label="Variable section"><svg viewBox="0 0 12 14"><path d="M2 2h8v9H2z" fill="#d4d4d4" stroke="#777"/><circle cx="7" cy="7" r="2.800" fill="#f4ea48"/></svg></button>
              </div>
              <button class="btn focus">Advanced</button>
              <label class="chk off"><input type="checkbox" disabled>Use tapered section</label>
            </div>
            <div class="gright">
              <div class="preview"><svg viewBox="0 0 79 50"><path d="M.5.500h78v49H.5z" fill="#bfbfbf" stroke="#444"/><path d="M27.500 14.500h20v25h-20z" fill="#ff0" stroke="#222"/><path d="M27 9.500h21M27.500 8v3M47.500 8v3M50 14.500h8M50 39.500h8M57.500 14v26" stroke="#222" fill="none" stroke-width=".9"/><path d="M27 9.500l3-1.500v3zM48 9.500l-3-1.500v3zM57.500 14l-1.500 3h3zM57.500 40l-1.500-3h3z" fill="#222"/><text x="36" y="8">b</text><text x="61" y="28">h</text></svg></div>
              <fieldset class="basic"><legend>Basic dimensions (cm)</legend>
                <label for="f-b">b</label><input id="f-b" type="text" value="0.0">
                <label for="f-h">h</label><input id="f-h" type="text" value="0.0">
              </fieldset>
            </div>
          </div>
          <div class="actions"><button class="btn">Apply</button><button class="btn" disabled>&lt;&lt;</button><button class="btn" disabled>&gt;&gt;</button><button class="btn">Close</button><button class="btn">Help</button></div>
        </div>
      </section>
      <section class="dialog d2">
        <div class="grip"><button aria-label="Close panel"><svg viewBox="0 0 7 7"><path d="M1.500 1.500l4 4M5.500 1.500l-4 4" stroke="#111" stroke-width="1.200"/></svg></button><button aria-label="Float panel"><svg viewBox="0 0 7 7"><path d="M1.500 1.500h4v4h-4z" fill="none" stroke="#111"/></svg></button><i></i></div>
        <div class="dbody">
          <div class="dtabs"><button class="cur">Beam Geometry</button><button>Span Geometry</button><button>Segments</button></div>
          <div class="page geometry">
            <div class="lcol">
              <div class="row"><label for="g-len">Total beam length:</label><input id="g-len" class="flat long" type="text" value="5.06" readonly><span class="unit">(m)</span></div>
              <div class="row"><label for="g-spans">Total number of spans:</label><input id="g-spans" class="flat short" type="text" value="1" readonly></div>
              <div class="row"><label for="g-id">Number of identical beams:</label><input id="g-id" class="short last" type="text" value="1"></div>
              <label class="chk simp"><input type="checkbox" checked>Simplified names</label>
              <fieldset class="auto"><legend>Automatic numbering of</legend><label class="chk"><input type="checkbox">Spans</label><label class="chk"><input type="checkbox" checked>Supports</label></fieldset>
            </div>
            <div class="rcol">
              <fieldset class="cant"><legend>Cantilever</legend><label class="chk off"><input type="checkbox" disabled>Left</label><label class="chk off"><input type="checkbox" disabled>Right</label></fieldset>
              <div class="spanrow"><button class="btn" disabled>Add span</button><span class="spin"><input type="text" value="1" aria-label="Spans to add" disabled><svg viewBox="0 0 11 14"><path d="M0 0v14M0 7h11" stroke="#bbb"/><path d="M3 5h5L5.500 2zM3 9h5l-2.500 3z" fill="#222"/></svg></span></div>
              <div class="spanrow"><button class="btn" disabled>Copy span</button><span class="spin"><input type="text" value="1" aria-label="Span to copy" disabled><svg viewBox="0 0 11 14"><path d="M0 0v14M0 7h11" stroke="#bbb"/><path d="M3 5h5L5.500 2zM3 9h5l-2.500 3z" fill="#222"/></svg></span></div>
              <div class="spanrow"><button class="btn" disabled>Delete span</button><span class="spin"><input type="text" value="1" aria-label="Span to delete" disabled><svg viewBox="0 0 11 14"><path d="M0 0v14M0 7h11" stroke="#bbb"/><path d="M3 5h5L5.500 2zM3 9h5l-2.500 3z" fill="#222"/></svg></span></div>
              <button class="btn orient">Change orientation</button>
            </div>
          </div>
          <div class="actions"><button class="btn">Apply</button><button class="btn" disabled>&lt;&lt;</button><button class="btn" disabled>&gt;&gt;</button><button class="btn">Close</button><button class="btn">Help</button></div>
        </div>
      </section>
    </div>
  </div>

  <aside class="rail">
    <div class="rg">
      <button aria-label="Beam"><svg class="ic14"><use href="#r-beam"/></svg></button>
      <button aria-label="Column"><svg class="ic14"><use href="#r-column"/></svg></button>
      <button aria-label="Spread footing"><svg class="ic14"><use href="#r-foot"/></svg></button>
      <button aria-label="Continuous footing"><svg class="ic14"><use href="#r-slab"/></svg></button>
      <button aria-label="Deep beam"><svg class="ic14"><use href="#r-deep"/></svg></button>
      <button aria-label="Wall"><svg class="ic14"><use href="#r-wall"/></svg></button>
      <button aria-label="Group"><svg class="ic14"><use href="#r-group"/></svg></button>
    </div>
    <div class="rg second">
      <button aria-label="Options list"><svg class="ic14"><use href="#r-list"/></svg></button>
      <button aria-label="Levels"><svg class="ic14"><use href="#r-levels"/></svg></button>
      <button aria-label="Calculation options"><svg class="ic14"><use href="#r-opts"/></svg></button>
      <button aria-label="Reinforcement pattern"><svg class="ic14"><use href="#r-rect"/></svg></button>
      <button aria-label="Section"><svg class="ic14"><use href="#i-tred"/></svg></button>
      <button aria-label="Dimensions"><svg class="ic14"><use href="#r-dim"/></svg></button>
      <button aria-label="Supports"><svg class="ic14"><use href="#r-support"/></svg></button>
      <button aria-label="Loads"><svg class="ic14"><use href="#r-load"/></svg></button>
      <button aria-label="Drawings"><svg class="ic14"><use href="#r-section"/></svg></button>
      <button class="apart" aria-label="Solid"><svg class="ic14"><use href="#r-solid"/></svg></button>
    </div>
    <p class="credit">© NairiSargsyan.com</p>
  </aside>
</main>

<nav class="docbar"><a href="#">Beam - View</a></nav>
<footer class="status">
  <span class="s1">Code : EN 1992-1-1:2004/</span>
  <span class="s2">Regulation: EN 1990:2002</span>
  <span class="s3"><svg class="ic8" viewBox="0 0 8 8"><path d="M1 3l2-2h5v4L6 7H1z" fill="#222"/><path d="M2 3.500h4v3" stroke="#aaa" fill="none"/></svg>C30/37</span>
  <span class="s4"><svg class="ic8" viewBox="0 0 8 8"><path d="M5 1H2L1 2v4l1 1h4l1-1V2L4 4" stroke="#9a3a40" fill="none"/></svg>B500C (Deformed</span>
  <span class="s4"><svg class="ic8" viewBox="0 0 8 8"><path d="M.5 3v2h7V3" stroke="#b02a30" fill="none"/></svg>B500C (Deformed</span>
  <span class="s5"><svg class="ic10" viewBox="0 0 10 10"><circle cx="5" cy="5" r="4.500" fill="url(#lamp)" stroke="#4a8a50" stroke-width=".6"/></svg>Results: available</span>
</footer>
</body>
</html>
```
FILE: styles.css
```css
* { box-sizing: border-box; }
html, body { margin: 0; }
body {
  display: flex; flex-direction: column; min-height: 100vh;
  background: #f0f0f0; color: #1c1c1c;
  font: 8px/10px "Liberation Sans", Arial, sans-serif;
}
button, input, select { font: inherit; color: inherit; margin: 0; padding: 0; border: 0; background: none; border-radius: 0; }
button { display: inline-flex; align-items: center; justify-content: center; }
a { color: inherit; text-decoration: none; }
h1, h2, p { margin: 0; font: inherit; }
i { display: block; }
svg { display: block; flex: none; }
fieldset { margin: 0; padding: 0; border: 1px solid #dcdcdc; min-width: 0; }
legend { padding: 0 2px; }
.defs { position: absolute; width: 0; height: 0; }
.ic6 { width: 6px; height: 6px; }
.ic8 { width: 8px; height: 8px; }
.ic10 { width: 10px; height: 10px; }
.ic12 { width: 12px; height: 12px; }
.ic14 { width: 14px; height: 14px; }

/* Title bar */
.titlebar { position: relative; display: flex; align-items: flex-start; height: 22px; background: #fff; font-family: "Open Sans", sans-serif; }
.titlebar h1 { flex: 1; padding-left: 120px; font-size: 8px; line-height: 23px; color: #111; white-space: nowrap; overflow: hidden; }
.infocenter { display: flex; align-items: stretch; width: 300px; height: 17px; margin-top: 5px; border: 1px solid #777; border-bottom: 0; background: linear-gradient(#aaa, #8c8c8c); }
.infocenter input { width: 132px; padding: 0 2px; background: #fff; border: 1px solid #555; border-width: 0 1px; font: italic 8px Roboto, sans-serif; }
.infocenter input::placeholder { color: #666; opacity: 1; }
.infocenter button { width: 18px; }
.infocenter .infoarrow { width: 9px; }
.infoarrow svg { width: 6px; height: 8px; }
.infocenter .signin { width: 84px; justify-content: flex-start; gap: 3px; color: #111; font: 9px Roboto, sans-serif; }
.signin .ic6 { margin-left: auto; }
.infocenter .infohelp { flex: 1; gap: 4px; justify-content: flex-end; padding-right: 1px; }
.winctl { display: flex; width: 121px; padding: 7px 14px 0 30px; justify-content: space-between; }
.logo { position: absolute; left: 3px; top: 7px; width: 25px; height: 25px; border: 1px solid #555; background: linear-gradient(#b9bbbd, #8c8e90); }
.logo svg { width: 23px; height: 23px; }
.logo span { position: absolute; left: 6px; bottom: 0; font: bold 5px/6px "Liberation Sans", sans-serif; color: #222; }

/* Menus and toolbar */
.menubar { display: flex; align-items: center; gap: 16px; height: 16px; padding-left: 39px; border-top: 1px solid #999; background: linear-gradient(#d9d9d9, #bdbdbd); font: 8px/14px "Open Sans", sans-serif; color: #222; }
.mdi { display: flex; gap: 3px; margin-left: auto; padding-right: 2px; }
.toolbar { height: 22px; background: #fff; border-bottom: 1px solid #a5a5a5; }
.tools { display: flex; align-items: center; width: 687px; height: 21px; padding-left: 4px; background: #f0f0f0; border-right: 1px solid #bbb; }
.tg { display: flex; }
.tg button { flex: 1; height: 20px; }
.tg .on { border: 1px solid #aaa; background: #fafafa; }
.g7 { width: 155px; }
.g4 { width: 89px; }
.g2 { width: 45px; margin-left: 5px; }
.g9 { width: 200px; margin: 0 1px 0 4px; }
.nav { margin-left: 0; }
.select { display: grid; grid-template-columns: 1fr 12px; align-items: center; }
.select select { grid-area: 1 / 1 / 2 / 3; width: 100%; height: 100%; appearance: none; background: #fff; border: 1px solid #999; }
.select svg { grid-area: 1 / 2; pointer-events: none; }
.layout { width: 138px; height: 16px; }

/* Work area */
.work { flex: 1; display: grid; grid-template-columns: 179px 1fr 24px; }

.side { display: flex; flex-direction: column; padding-right: 4px; }
.sidehead { display: flex; align-items: center; height: 17px; padding-left: 2px; font: bold 8px/15px "Open Sans", sans-serif; color: #111; }
.sidehead button { width: 9px; height: 9px; margin-left: auto; margin-right: 1px; border: 1px solid #aaa; background: #ddd; }
.sidehead button svg { width: 7px; height: 7px; }
.inspector { display: flex; flex-direction: column; height: 322px; padding-right: 3px; border: 1px solid #777; border-left: 2px solid #999; background: #fff; }
.insptools { display: flex; align-items: center; height: 20px; margin-right: -3px; background: #f0f0f0; border-bottom: 1px solid #999; }
.insptools button { width: 18px; }
.insptools .far { margin-left: 10px; }
.insptools .near { margin-left: 5px; }
.treehead { display: grid; grid-template-columns: 61px 24px 1fr; height: 14px; line-height: 14px; padding-left: 1px; }
.treehead span { padding-left: 4px; border-right: 1px solid #e5e5e5; }
.treehead span:last-child { border: 0; }
.tree { position: relative; display: grid; grid-template-rows: repeat(9, 1fr); height: 105px; }
.treelines { position: absolute; left: 1px; top: 0; width: 60px; height: 105px; }
.trow { display: flex; align-items: stretch; min-height: 0; }
.trow span { display: flex; align-items: center; white-space: nowrap; }
.t1 { padding-left: 16px; gap: 3px; }
.t2 { padding-left: 36px; }
.kind { margin: 0 2px 0 45px; }
.cell { flex: 1; padding-left: 6px; gap: 18px; }
.sel { background: #0a78d7; color: #fff; }
.ok { color: #12b83c; }
.warn { color: #e2c62c; }
.sel .warn { color: #ffe92e; }

.hscroll { display: flex; align-items: center; height: 11px; background: #f0f0f0; }
.hscroll .track { flex: 1; height: 100%; }
.thumb { background: #a6a6a6; }
.hscroll .thumb { height: 100%; }
.treescroll { margin-top: auto; margin-bottom: 5px; padding: 0 2px; }
.treescroll .track { margin: 0 3px; }
.treescroll .thumb { width: 54%; }
.vscroll { display: flex; flex-direction: column; align-items: center; width: 11px; background: #f0f0f0; }
.vscroll .thumb { width: 100%; }

.slanttabs, .beamtab { display: flex; align-items: center; height: 14px; gap: 1px; font: 8px/13px "Open Sans", sans-serif; color: #111; }
.slant { width: 6px; height: 13px; }
.slanttabs { margin-bottom: 2px; }
.slanttabs b { background: #fff; }
.props { flex: 1; display: flex; align-items: stretch; justify-content: space-between; border-left: 1px solid #aaa; border-top: 1px solid #888; }
.props table { width: 152px; height: 308px; border-collapse: collapse; table-layout: fixed; background: #fff; line-height: 8px; }
.c8 { width: 8px; }
.c40 { width: 40px; }
.c61 { width: 61px; }
.c26 { width: 26px; }
.props th, .props td { padding: 0 1px; border: 1px solid #777; white-space: nowrap; text-align: left; vertical-align: middle; font-weight: normal; }
.props thead th { height: 13px; background: #c4c4c4; text-align: center; }
.props .g td { background: #abc8f2; }
.props .s td { background: #c6dbf7; }
.props tr .n { background: #fff; border-style: none solid none none; }
.props .s .n { border-right-style: none; }
.props tr .x { background: #fff; padding: 0; border-style: none solid none none; }
.x i { width: 7px; height: 7px; border: 1px solid #777; background: linear-gradient(#333, #333) center / 3px 1px no-repeat #fff; }
.props .v { text-align: right; }
.props .list { padding-right: 5px; }
.props .u { text-align: center; }
.props .vscroll .thumb { flex: 1; background: #cdcdcd; }
.props .vscroll svg { margin: 2px 0; }
.beamtab b { font: bold 9px/13px "Liberation Sans", sans-serif; }
.beamtab { gap: 2px; border-top: 1px solid #ccc; }
.viewbtns { display: flex; height: 14px; padding-left: 1px; gap: 1px; }
.viewbtns button { width: 15px; height: 13px; border-right: 1px solid #555; border-bottom: 1px solid #555; }

/* Model view */
.center { display: flex; flex-direction: column; border-right: 1px solid #b5b5b5; min-width: 0; }
.viewer { display: grid; grid-template-columns: 1fr 11px; padding-top: 1px; }
.viewmain { min-width: 0; }
.viewtabs { display: flex; height: 13px; padding-left: 2px; line-height: 13px; }
.viewtabs a { padding: 0 2px; border-right: 1px solid #ddd; white-space: nowrap; }
.viewtabs .cur { padding: 0 3px; background: #fff; }
.canvas { width: 100%; height: auto; background: #212830; }
.canvas text { font-family: "Liberation Sans", sans-serif; text-anchor: middle; }
.scale text { font-size: 14px; fill: #d9dadb; }
.dims text { font-size: 16px; fill: #c4c6c8; }
.tags text { font-size: 8px; }
.tags text:not([fill]) { fill: #b5b8bb; }
.ucs text { font-size: 11px; }
.canvas .face { font: bold 12px "Open Sans", sans-serif; fill: #4a505a; }
.viewv .gap { height: 207px; }
.viewv .thumb { height: 114px; }
.viewv .rest { flex: 1; }
.viewh { height: 12px; margin-top: 1px; padding: 0 1px; background: #f4f4f4; }
.viewh .thumb { width: 48%; margin-left: 26%; }
.sizegrip { width: 11px; height: 11px; }

/* Docked dialogs */
.dialogs { flex: 1; display: flex; margin-top: 2px; border-top: 1px solid #bbb; border-bottom: 1px solid #bbb; font-family: Lato, sans-serif; }
.dialog { display: flex; }
.d1 { width: 292px; border-right: 1px solid #bbb; }
.grip { display: flex; flex-direction: column; align-items: center; width: 8px; margin: 2px 6px 4px 2px; gap: 1px; }
.d1 .grip { margin-left: 1px; }
.grip button { width: 7px; height: 7px; border-right: 1px solid #666; border-bottom: 1px solid #666; }
.grip svg { width: 7px; height: 7px; }
.grip i { flex: 1; width: 4px; border: 1px solid #bbb; border-top: 0; }
.dbody { display: flex; flex-direction: column; padding-top: 2px; }
.dtabs { display: flex; align-items: flex-end; height: 14px; }
.dtabs button { height: 12px; padding: 0 3px; border: 1px solid #ddd; border-bottom: 0; }
.dtabs .cur { height: 14px; padding: 0 4px; background: #fff; }
.page { display: flex; height: 148px; border: 1px solid #ddd; border-top: 0; background: #fff; }
.actions { display: flex; justify-content: flex-end; gap: 2px; padding-top: 5px; }
.actions .btn { width: 51px; }
.btn { height: 15px; border: 1px solid #adadad; background: #e1e1e1; }
.btn:disabled { background: #ccc; border-color: #bfbfbf; color: #8a8a8a; }
.btn.focus { border: 2px solid #2580c8; border-width: 1px 2px 2px 2px; outline: 0; }
.page input[type="text"] { height: 14px; border: 1px solid #777; background: #fff; padding: 0 3px; }
.chk { display: inline-flex; align-items: center; gap: 2px; white-space: nowrap; }
.off { color: #888; }
.chk input { appearance: none; flex: none; display: grid; place-items: center; width: 10px; height: 10px; border: 1px solid #444; background: #fff; }
.chk input:disabled { border-color: #ccc; }
.chk input:checked::before { content: ""; width: 7px; height: 7px; background: #222; clip-path: polygon(0 50%, 14% 38%, 38% 64%, 86% 8%, 100% 20%, 38% 92%); }

.general { width: 262px; padding: 3px 8px 0; gap: 15px; }
.gleft { display: flex; flex-direction: column; align-items: flex-start; width: 109px; }
.fields { display: grid; grid-template-columns: 47px 62px; grid-auto-rows: 15px; row-gap: 3px; align-items: center; padding-left: 4px; margin-bottom: 4px; }
.fields .select { height: 15px; }
.fields input[type="text"] { width: 62px; height: 15px; }
.shapes { display: flex; gap: 2px; margin-bottom: 8px; }
.shapes button { width: 22px; height: 22px; border: 1px solid #444; background: #f4f4f4; }
.shapes svg { width: 20px; height: 20px; }
.shapes .dark { background: #9c9c9c; border-color: #9c9c9c; }
.shapes .tiny { width: 13px; height: 15px; border: 0; background: #e0e0e0; }
.shapes .tiny svg { width: 12px; height: 14px; }
.gleft .btn { width: 108px; height: 16px; margin: 0 0 7px 1px; }
.gright { width: 102px; }
.preview { margin-top: -1px; width: 97px; height: 62px; padding: 6px 0 0 8px; border-top: 1px solid #999; border-left: 1px solid #999; }
.preview svg { width: 79px; height: 50px; }
.preview text { font: 8px Roboto, sans-serif; text-anchor: start; }
.basic { display: grid; grid-template-columns: 15px 29px; row-gap: 6px; align-content: start; align-items: center; height: 68px; margin-top: 4px; padding: 3px 3px 0; }
.basic input[type="text"] { width: 29px; }

.geometry { width: 284px; }
.geometry .lcol { width: 149px; padding: 6px 0 0 0; display: flex; flex-direction: column; }
.geometry .row { display: flex; align-items: center; height: 17px; padding-left: 3px; }
.geometry .row label { width: 104px; flex: none; white-space: nowrap; }
.page .row input[type="text"].flat { width: 23px; height: 12px; border-color: #999; border-width: 1px 0 0 1px; }
.page .row input[type="text"].long { margin-left: 8px; }
.geometry .unit { padding-left: 8px; }
.page .row input[type="text"].short { width: 15px; height: 12px; margin-left: 16px; padding: 0 0 0 5px; }
.page .row input[type="text"].last { width: 18px; height: 15px; margin-left: 14px; padding-left: 4px; }
.simp { height: 12px; padding-left: 7px; }
.auto { display: flex; gap: 8px; height: 24px; padding-left: 6px; }
.auto legend, .cant legend { margin-left: -4px; }
.rcol { flex: 1; display: flex; flex-direction: column; align-items: flex-start; padding: 6px 0 0 2px; }
.cant { display: flex; flex-direction: column; align-items: flex-start; gap: 7px; width: 74px; height: 49px; margin: 0 0 11px 18px; padding: 4px 0 0 6px; }
.cant .chk { height: 10px; }
.spanrow { display: flex; gap: 3px; margin-bottom: 4px; }
.spanrow .btn { width: 65px; }
.spin { display: flex; width: 26px; border: 1px solid #bbb; background: #f4f4f4; }
.page .spin input[type="text"] { width: 13px; height: 13px; border: 0; color: #777; }
.spin svg { width: 11px; height: 13px; }
.orient { width: 96px; height: 16px; }

/* Right rail */
.rail { display: flex; flex-direction: column; margin-left: 1px; background: #fff; border-left: 1px solid #ddd; }
.rg { display: flex; flex-direction: column; align-items: center; padding-top: 2px; background: #f0f0f0; border-top: 1px dotted #999; border-bottom: 1px solid #bbb; }
.rg button { width: 100%; height: 20px; }
.second { margin-top: 29px; }
.rg .apart { margin-top: 29px; }
.credit { margin: auto 0 0 auto; writing-mode: vertical-rl; transform: rotate(180deg); font: 12px/15px "Noto Sans", sans-serif; color: #111; }

/* Bottom bars */
.docbar { display: flex; height: 15px; border-bottom: 1px solid #ccc; }
.docbar a { width: 56px; padding-left: 3px; line-height: 14px; background: #fff; }
.status { display: flex; align-items: stretch; height: 17px; border-bottom: 2px solid #aaa; font: 9px/15px Roboto, sans-serif; white-space: nowrap; }
.status span { display: flex; align-items: center; gap: 4px; border-right: 1px solid #ddd; }
.s1 { width: 106px; padding-left: 3px; }
.s2 { width: 217px; padding-left: 2px; }
.s3 { width: 72px; padding-left: 3px; }
.s4 { width: 88px; padding-left: 4px; }
.s5 { width: 160px; padding-left: 2px; }
```
